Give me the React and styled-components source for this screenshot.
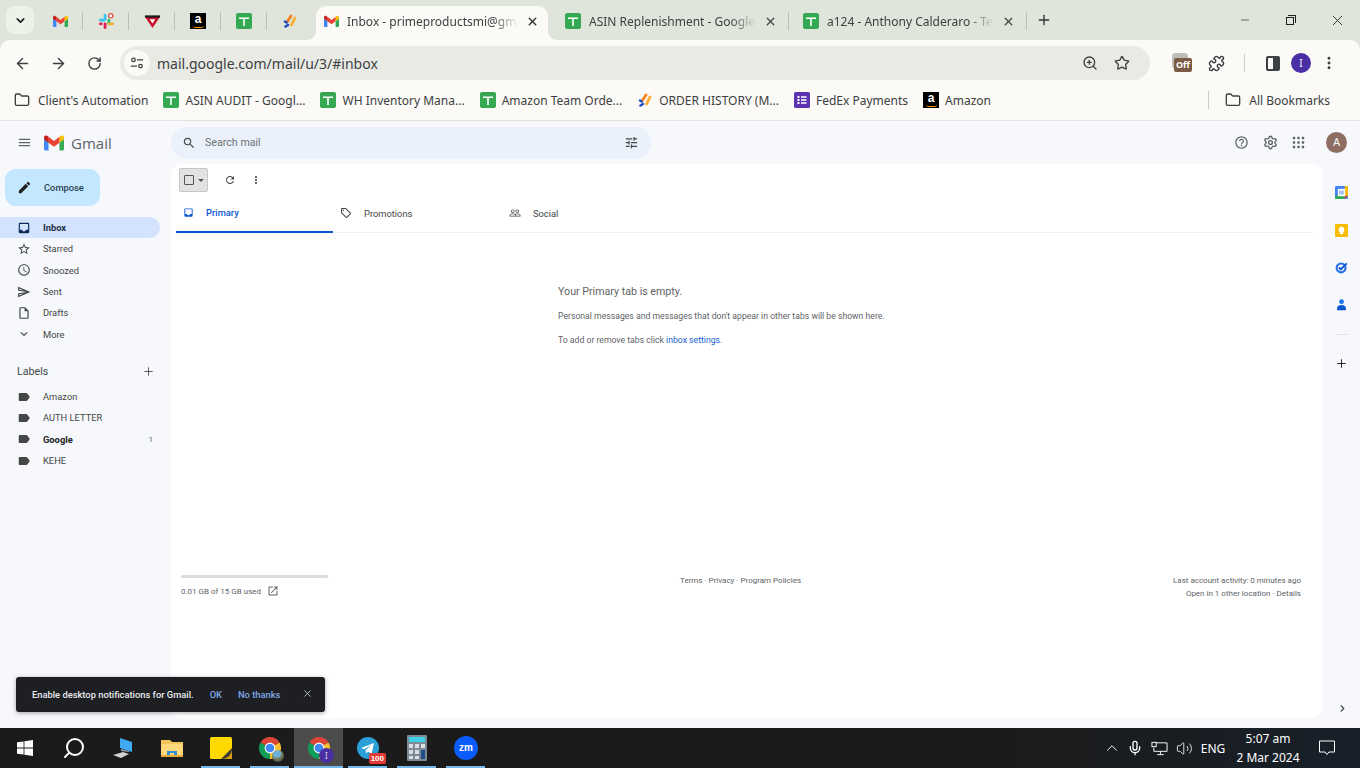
import React from 'react';
import styled, { createGlobalStyle } from 'styled-components';
import { Puzzle, Settings, Minus, Plus, X, ArrowLeft, ArrowRight, RotateCw, Star, ZoomIn, MoreVertical, Folder, ChevronUp, ChevronRight, ChevronDown, Search, Mic, Volume2 } from 'lucide-react';

const GlobalStyle = createGlobalStyle`
  html, body { margin: 0; padding: 0; background: #fff; }
  * { box-sizing: border-box; }
`;

const UI_FONT = `"Noto Sans", "Open Sans", sans-serif`;
const GMAIL_FONT = `Roboto, "Liberation Sans", sans-serif`;

const paths = {
  menu: 'M3 18h18v-2H3v2zm0-5h18v-2H3v2zm0-7v2h18V6H3z',
  search: 'M15.5 14h-.79l-.28-.27C15.41 12.59 16 11.11 16 9.5 16 5.91 13.09 3 9.5 3S3 5.91 3 9.5 5.91 16 9.5 16c1.61 0 3.09-.59 4.23-1.57l.27.28v.79l5 4.99L20.49 19l-4.99-5zm-6 0C7.01 14 5 11.99 5 9.5S7.01 5 9.5 5 14 7.01 14 9.5 11.99 14 9.5 14z',
  tune: 'M3 17v2h6v-2H3zM3 5v2h10V5H3zm10 16v-2h8v-2h-8v-2h-2v6h2zM7 9v2H3v2h4v2h2V9H7zm14 4v-2H11v2h10zm-6-4h2V7h4V5h-4V3h-2v6z',
  pencil: 'M3 17.25V21h3.75L17.81 9.94l-3.75-3.75L3 17.25zM20.71 7.04c.39-.39.39-1.02 0-1.41l-2.34-2.34c-.39-.39-1.02-.39-1.41 0l-1.83 1.83 3.75 3.75 1.83-1.83z',
  inbox: 'M19 3H5c-1.1 0-2 .9-2 2v14c0 1.1.9 2 2 2h14c1.1 0 2-.9 2-2V5c0-1.1-.9-2-2-2zm0 12h-4c0 1.66-1.34 3-3 3s-3-1.34-3-3H5V5h14v10z',
  star: 'M22 9.24l-7.19-.62L12 2 9.19 8.63 2 9.24l5.46 4.73L5.82 21 12 17.27 18.18 21l-1.63-7.03L22 9.24zM12 15.4l-3.76 2.27 1-4.28-3.32-2.88 4.38-.38L12 6.1l1.71 4.04 4.38.38-3.32 2.88 1 4.28L12 15.4z',
  clock: 'M11.99 2C6.47 2 2 6.48 2 12s4.47 10 9.99 10C17.52 22 22 17.52 22 12S17.52 2 11.99 2zM12 20c-4.42 0-8-3.58-8-8s3.58-8 8-8 8 3.58 8 8-3.58 8-8 8zm.5-13H11v6l5.25 3.15.75-1.23-4.5-2.67z',
  sent: 'M4.01 6.03l7.51 3.22-7.52-1 .01-2.22m7.5 8.72L4 17.97v-2.22l7.51-1M2.01 3L2 10l15 2-15 2 .01 7L23 12 2.01 3z',
  draft: 'M14 2H6c-1.1 0-1.99.9-1.99 2L4 20c0 1.1.89 2 1.99 2H18c1.1 0 2-.9 2-2V8l-6-6zM6 20V4h7v5h5v11H6z',
  down: 'M16.59 8.59L12 13.17 7.41 8.59 6 10l6 6 6-6z',
  label: 'M17.63 5.84C17.27 5.33 16.67 5 16 5L5 5.01C3.9 5.01 3 5.9 3 7v10c0 1.1.9 1.99 2 1.99L16 19c.67 0 1.27-.33 1.63-.84L22 12l-4.37-6.16z',
  refresh: 'M17.65 6.35C16.2 4.9 14.21 4 12 4c-4.42 0-7.99 3.58-7.99 8s3.57 8 7.99 8c3.73 0 6.84-2.55 7.73-6h-2.08c-.82 2.33-3.04 4-5.65 4-3.31 0-6-2.69-6-6s2.69-6 6-6c1.66 0 3.14.69 4.22 1.78L13 11h7V4l-2.35 2.35z',
  more: 'M12 8c1.1 0 2-.9 2-2s-.9-2-2-2-2 .9-2 2 .9 2 2 2zm0 2c-1.1 0-2 .9-2 2s.9 2 2 2 2-.9 2-2-.9-2-2-2zm0 6c-1.1 0-2 .9-2 2s.9 2 2 2 2-.9 2-2-.9-2-2-2z',
  tag: 'M21.41 11.58l-9-9C12.05 2.22 11.55 2 11 2H4c-1.1 0-2 .9-2 2v7c0 .55.22 1.05.59 1.42l9 9c.36.36.86.58 1.41.58s1.05-.22 1.41-.59l7-7c.37-.36.59-.86.59-1.41s-.23-1.06-.59-1.42zM13 20.01L4 11V4h7v-.01l9 9-7 7.02zM6.5 5A1.5 1.5 0 1 0 6.5 8 1.5 1.5 0 1 0 6.5 5z',
  people: 'M16.5 13c-1.2 0-3.07.34-4.5 1-1.43-.67-3.3-1-4.5-1C5.33 13 1 14.08 1 16.25V19h22v-2.75c0-2.17-4.33-3.25-6.5-3.25zm-4 4.5h-10v-1.25c0-.54 2.56-1.75 5-1.75s5 1.21 5 1.75v1.25zm9 0H14v-1.25c0-.46-.2-.86-.52-1.22.88-.3 1.96-.53 3.02-.53 2.44 0 5 1.21 5 1.75v1.25zM7.5 12c1.93 0 3.5-1.57 3.5-3.5S9.43 5 7.5 5 4 6.57 4 8.5 5.57 12 7.5 12zm0-5.5c1.1 0 2 .9 2 2s-.9 2-2 2-2-.9-2-2 .9-2 2-2zm9 5.5c1.93 0 3.5-1.57 3.5-3.5S18.43 5 16.5 5 13 6.57 13 8.5s1.57 3.5 3.5 3.5zm0-5.5c1.1 0 2 .9 2 2s-.9 2-2 2-2-.9-2-2 .9-2 2-2z',
  help: 'M11 18h2v-2h-2v2zm1-16C6.48 2 2 6.48 2 12s4.48 10 10 10 10-4.48 10-10S17.52 2 12 2zm0 18c-4.41 0-8-3.59-8-8s3.59-8 8-8 8 3.59 8 8-3.59 8-8 8zm0-14c-2.21 0-4 1.79-4 4h2c0-1.1.9-2 2-2s2 .9 2 2c0 2-3 1.75-3 5h2c0-2.25 3-2.5 3-5 0-2.21-1.79-4-4-4z',
  open: 'M19 19H5V5h7V3H5c-1.11 0-2 .9-2 2v14c0 1.1.89 2 2 2h14c1.1 0 2-.9 2-2v-7h-2v7zM14 3v2h3.59l-9.83 9.83 1.41 1.41L19 6.41V10h2V3h-7z',
};

const Svg = styled.svg`
  display: block;
  flex: none;
  width: ${(p) => p.$size}px;
  height: ${(p) => p.$size}px;
  fill: ${(p) => p.$color || '#444746'};
`;

const MatIcon = ({ name, size = 13, color }) => (
  <Svg viewBox="0 0 24 24" $size={size} $color={color}><path d={paths[name]} /></Svg>
);

const GmailLogo = ({ size }) => (
  <Svg viewBox="0 0 256 193" $size={size}>
    <path fill="#4285F4" d="M58.182 192.05V93.14L27.507 65.077 0 49.504v125.091c0 9.658 7.825 17.455 17.455 17.455h40.727Z" />
    <path fill="#34A853" d="M197.818 192.05h40.727c9.659 0 17.455-7.826 17.455-17.455V49.505l-31.156 17.837-27.026 25.798v98.91Z" />
    <path fill="#EA4335" d="m58.182 93.14-4.174-38.647 4.174-36.989L128 69.868l69.818-52.364 4.669 34.992-4.669 40.644L128 145.504z" />
    <path fill="#FBBC04" d="M197.818 17.504V93.14L256 49.504V26.231c0-21.585-24.64-33.89-41.89-20.945l-16.292 12.218Z" />
    <path fill="#C5221F" d="m0 49.504 26.759 20.07L58.182 93.14V17.504L41.89 5.286C24.61-7.66 0 4.646 0 26.23v23.273Z" />
  </Svg>
);

const SheetsIcon = ({ size = 16 }) => (
  <Svg viewBox="0 0 16 16" $size={size}>
    <rect width="16" height="16" rx="2" fill="#34a853" />
    <path d="M3 4.5h10v1.6H8.8V13H7.2V6.1H3z" fill="#fff" />
  </Svg>
);

const SlackIcon = () => (
  <Svg viewBox="0 0 18 18" $size={17}>
    <rect x="6" y="1" width="3" height="7" rx="1.5" fill="#36c5f0" />
    <rect x="1" y="6" width="7" height="3" rx="1.5" fill="#36c5f0" />
    <rect x="10" y="6" width="3" height="7" rx="1.5" fill="#2eb67d" transform="rotate(0)" />
    <rect x="10" y="10" width="7" height="3" rx="1.5" fill="#ecb22e" />
    <rect x="6" y="10" width="3" height="7" rx="1.5" fill="#e01e5a" />
    <rect x="1" y="10" width="4" height="3" rx="1.5" fill="#e01e5a" />
    <circle cx="13.5" cy="3" r="2.3" fill="#fff" stroke="#e0483e" strokeWidth="1.3" />
  </Svg>
);

const VeeIcon = () => (
  <Svg viewBox="0 0 18 16" $size={17}>
    <path d="M1 3h16L9 15z" fill="#c8102e" />
    <path d="M1 1.5h16V4H1z" fill="#1d1d1d" />
    <path d="M6 5.5h6L9 10z" fill="#fff" />
  </Svg>
);

const JiraIcon = ({ size = 16 }) => (
  <Svg viewBox="0 0 16 16" $size={size}>
    <path d="M9 3 5 9" stroke="#f4811f" strokeWidth="2.8" strokeLinecap="round" fill="none" />
    <path d="M13 5l-3.5 7" stroke="#fbb03b" strokeWidth="2.8" strokeLinecap="round" fill="none" />
    <path d="M3 8.5l1.5 1M3.5 13.5l2.5-1.5" stroke="#1c4fc4" strokeWidth="2.6" strokeLinecap="round" fill="none" />
  </Svg>
);

const FormsIcon = () => (
  <Svg viewBox="0 0 16 16" $size={16}>
    <rect width="16" height="16" rx="1.5" fill="#5e35b1" />
    <path d="M3.5 4h2v2h-2zM7 4.3h5.5v1.4H7zM3.5 7h2v2h-2zM7 7.3h5.5v1.4H7zM3.5 10h2v2h-2zM7 10.3h5.5v1.4H7z" fill="#fff" />
  </Svg>
);

const AmazonBox = styled.span`
  position: relative;
  flex: none;
  display: block;
  width: 16px;
  height: 16px;
  background: #000;
  color: #fff;
  font: 700 12px/12px "Liberation Sans", sans-serif;
  text-align: center;
  &::after {
    content: '';
    position: absolute;
    left: 3px;
    right: 2px;
    bottom: 1.5px;
    height: 2px;
    border-bottom: 1.5px solid #f90;
    border-radius: 0 0 8px 8px;
  }
`;
const AmazonIcon = () => <AmazonBox>a</AmazonBox>;

const ChromeLogo = ({ size = 24 }) => (
  <Svg viewBox="0 0 24 24" $size={size}>
    <path d="M12 12 2.47 6.5A11 11 0 0 1 21.53 6.5Z" fill="#db4437" />
    <path d="M12 12 21.53 6.5A11 11 0 0 1 12 23Z" fill="#fbc02d" />
    <path d="M12 12 12 23A11 11 0 0 1 2.47 6.5Z" fill="#0f9d58" />
    <circle cx="12" cy="12" r="5.4" fill="#fff" />
    <circle cx="12" cy="12" r="4.3" fill="#4285f4" />
  </Svg>
);

/* ---------- browser chrome ---------- */

const Page = styled.div`
  position: relative;
  width: 1360px;
  height: 768px;
  overflow: hidden;
  display: flex;
  flex-direction: column;
  background: #dfe5da;
  font-family: ${UI_FONT};
`;

const TabStrip = styled.div`
  height: 40px;
  flex: none;
  display: flex;
  align-items: flex-end;
  padding-left: 6px;
`;

const TabSearch = styled.div`
  width: 28px;
  height: 28px;
  align-self: flex-start;
  margin: 6px 3px 0 0;
  border-radius: 8px;
  background: #edf2e9;
  display: flex;
  align-items: center;
  justify-content: center;
`;

const PinnedTab = styled.div`
  width: 46px;
  height: 34px;
  display: flex;
  align-items: center;
  justify-content: center;
  position: relative;
  padding-bottom: 4px;
  &::after {
    content: '';
    display: ${(p) => (p.$sep ? 'block' : 'none')};
    position: absolute;
    right: 0;
    top: 6px;
    height: 18px;
    width: 1px;
    background: #b9c2b4;
  }
`;

const ActiveTab = styled.div`
  position: relative;
  width: 232px;
  height: 34px;
  margin: 0 3px;
  background: #fbfaf6;
  border-radius: 10px 10px 0 0;
  display: flex;
  align-items: center;
  padding: 0 9px 4px 8px;
  gap: 8px;
  margin-left: 3px;
  &::before, &::after {
    content: '';
    position: absolute;
    bottom: 0;
    width: 8px;
    height: 8px;
    background: radial-gradient(circle at ${(p) => p.$c || '0 0'}, transparent 8px, #fbfaf6 8.5px);
  }
  &::before { left: -8px; background: radial-gradient(circle at 0 0, transparent 7.5px, #fbfaf6 8px); }
  &::after { right: -8px; background: radial-gradient(circle at 100% 0, transparent 7.5px, #fbfaf6 8px); }
`;

const Tab = styled.div`
  position: relative;
  width: 238px;
  height: 34px;
  display: flex;
  align-items: center;
  gap: 8px;
  padding: 0 12px 4px 14px;
  &::after {
    content: '';
    position: absolute;
    right: 0;
    top: 6px;
    height: 18px;
    width: 1px;
    background: #b9c2b4;
  }
`;

const TabTitle = styled.span`
  flex: 1;
  min-width: 0;
  overflow: hidden;
  white-space: nowrap;
  font-size: 12px;
  color: #3c4043;
  -webkit-mask-image: linear-gradient(to right, #000 85%, transparent 100%);
  mask-image: linear-gradient(to right, #000 85%, transparent 100%);
`;

const NewTab = styled.div`
  width: 34px;
  height: 34px;
  display: flex;
  align-items: center;
  justify-content: center;
  padding-bottom: 6px;
`;

const WindowControls = styled.div`
  margin-left: auto;
  align-self: flex-start;
  display: flex;
`;

const WindowButton = styled.div`
  width: 46px;
  height: 40px;
  display: flex;
  align-items: center;
  justify-content: center;
`;

const RestoreGlyph = styled.span`
  position: relative;
  display: block;
  width: 8px;
  height: 8px;
  margin: 2px 2px 0 0;
  border: 1px solid #1f1f1f;
  background: #dfe5da;
  &::before {
    content: '';
    position: absolute;
    top: -3px;
    right: -3px;
    width: 7px;
    height: 7px;
    border-top: 1px solid #1f1f1f;
    border-right: 1px solid #1f1f1f;
    border-radius: 0 1px 0 0;
  }
`;

const Toolbar = styled.div`
  height: 40px;
  flex: none;
  display: flex;
  align-items: center;
  background: #fbfaf6;
  border-radius: 10px 10px 0 0;
  padding: 6px 0 0 4px;
`;

const NavButton = styled.div`
  width: 36px;
  height: 34px;
  flex: none;
  display: flex;
  align-items: center;
  justify-content: center;
`;

const Omnibox = styled.div`
  width: 1030px;
  height: 34px;
  margin-left: 8px;
  background: #e9eae3;
  border-radius: 17px;
  display: flex;
  align-items: center;
  padding: 0 12px 0 4px;
`;

const SiteInfo = styled.div`
  width: 26px;
  height: 26px;
  border-radius: 50%;
  background: #fbfaf6;
  display: flex;
  align-items: center;
  justify-content: center;
  margin-right: 7px;
`;

const Url = styled.span`
  flex: 1;
  font-size: 14px;
  color: #3c4043;
`;

const OmniAction = styled.div`
  width: 32px;
  display: flex;
  align-items: center;
  justify-content: center;
`;

const ToolActions = styled.div`
  display: flex;
  align-items: center;
  margin-left: 12px;
`;

const ToolDivider = styled.div`
  width: 1px;
  height: 18px;
  margin: 0 10px;
  background: #c9cfc4;
`;

const ExtensionOff = styled.div`
  position: relative;
  width: 36px;
  height: 34px;
`;

const OffBack = styled.span`
  position: absolute;
  left: 10px;
  top: 7px;
  width: 16px;
  height: 16px;
  border-radius: 4px;
  background: #bdbdb8;
`;

const OffBadge = styled.span`
  position: absolute;
  left: 12px;
  top: 12px;
  width: 18px;
  height: 14px;
  border-radius: 2px;
  background: #7a5c45;
  color: #fff;
  font: 700 9px/14px ${UI_FONT};
  text-align: center;
`;

const Profile = styled.div`
  width: 20px;
  height: 20px;
  border-radius: 50%;
  background: #4a2ea3;
  color: #fff;
  font-size: 10px;
  line-height: 20px;
  text-align: center;
`;

const PanelIcon = styled.span`
  display: block;
  width: 14px;
  height: 15px;
  border: 2px solid #3c4043;
  border-radius: 2px;
  background: linear-gradient(to right, transparent 50%, #3c4043 50%);
`;

const BookmarksBar = styled.div`
  height: 40px;
  flex: none;
  display: flex;
  align-items: center;
  background: #fbfaf6;
  padding: 0 15px 0 14px;
`;

const Bookmark = styled.div`
  display: flex;
  align-items: center;
  gap: ${(p) => p.$gap || 6}px;
  margin-right: 15px;
  font-size: 12px;
  color: #3c4043;
  white-space: nowrap;
`;

const BookmarkDivider = styled.div`
  width: 1px;
  height: 18px;
  margin: 0 16px 0 auto;
  background: #c9cfc4;
`;

/* ---------- gmail ---------- */

const Gmail = styled.div`
  flex: 1;
  min-height: 0;
  display: flex;
  flex-direction: column;
  background: #f6f8fc;
  border-top: 1px solid #e6e3de;
  font-family: ${GMAIL_FONT};
  color: #444746;
`;

const Header = styled.header`
  height: 43px;
  flex: none;
  display: flex;
  align-items: center;
`;

const Brand = styled.div`
  width: 171px;
  flex: none;
  display: flex;
  align-items: center;
  padding-left: 17px;
`;

const BrandName = styled.span`
  margin-left: 7px;
  font: 400 15px "Open Sans", sans-serif;
  color: #5f6368;
`;

const SearchBox = styled.div`
  width: 480px;
  height: 32px;
  border-radius: 16px;
  background: #eaf1fb;
  display: flex;
  align-items: center;
  padding: 0 12px 0 11px;
  gap: 9px;
  font-size: 10.67px;
  color: #6f7275;
`;

const SearchLabel = styled.span`
  flex: 1;
`;

const HeaderActions = styled.div`
  margin-left: auto;
  display: flex;
  align-items: center;
  gap: 14px;
  padding-right: 13px;
`;

const Avatar = styled.div`
  width: 21px;
  height: 21px;
  margin-left: 7px;
  border-radius: 50%;
  background: #8d6e63;
  color: #fff;
  font-size: 11px;
  line-height: 21px;
  text-align: center;
`;

const Body = styled.div`
  flex: 1;
  min-height: 0;
  display: flex;
`;

const Sidebar = styled.nav`
  width: 171px;
  flex: none;
  padding-top: 5px;
`;

const Compose = styled.div`
  width: 95px;
  height: 37px;
  margin: 0 0 11px 5px;
  border-radius: 11px;
  background: #c2e7ff;
  display: flex;
  align-items: center;
  padding-left: 12px;
  gap: 12px;
  font-size: 9.33px;
  font-weight: 500;
  color: #2c3e50;
`;

const NavRow = styled.div`
  width: 160px;
  height: 21.33px;
  display: flex;
  align-items: center;
  padding: 0 7px 0 17px;
  gap: 12px;
  border-radius: 0 11px 11px 0;
  font-size: 9.33px;
  background: ${(p) => (p.$active ? '#d3e3fd' : 'transparent')};
  font-weight: ${(p) => (p.$active || p.$bold ? 700 : 400)};
  color: ${(p) => (p.$active ? '#1f2f4a' : p.$bold ? '#202124' : '#444746')};
`;

const NavText = styled.span`
  flex: 1;
`;

const NavCount = styled.span`
  font-size: 8px;
  font-weight: 400;
  color: #5f6368;
`;

const LabelsHeader = styled.div`
  width: 160px;
  height: 18px;
  margin-top: 18px;
  margin-bottom: 5px;
  padding: 0 5px 0 17px;
  display: flex;
  align-items: center;
  justify-content: space-between;
  font-size: 10.67px;
`;

const MainPanel = styled.main`
  width: 1152px;
  height: 554px;
  flex: none;
  display: flex;
  flex-direction: column;
  background: #fff;
  border-radius: 11px;
`;

const ListToolbar = styled.div`
  height: 32px;
  flex: none;
  padding: 4px 0 4px 8px;
  display: flex;
  align-items: center;
`;

const SelectButton = styled.div`
  width: 29px;
  height: 24px;
  border: 1px solid #c8c8c8;
  border-radius: 2px;
  background: #e2e2e2;
  display: flex;
  align-items: center;
  padding-left: 3px;
  margin-right: 9px;
`;

const CheckBox = styled.span`
  display: block;
  width: 10px;
  height: 10px;
  margin-left: 1px;
  border: 1px solid #555;
  border-radius: 1px;
`;

const Caret = styled.span`
  display: block;
  margin-left: 4px;
  border-left: 3px solid transparent;
  border-right: 3px solid transparent;
  border-top: 3px solid #555;
`;

const ToolButton = styled.div`
  width: 26px;
  display: flex;
  align-items: center;
  justify-content: center;
`;

const Tabs = styled.div`
  height: 37px;
  flex: none;
  margin: 0 10px 0 5px;
  display: flex;
  border-bottom: 1px solid #efefef;
`;

const CategoryTab = styled.div`
  width: ${(p) => p.$w}px;
  height: 37px;
  display: flex;
  align-items: center;
  gap: 12px;
  padding: 0 0 3px 7px;
  font-size: 9.33px;
  font-weight: ${(p) => (p.$active ? 500 : 400)};
  color: ${(p) => (p.$active ? '#0b57d0' : '#444746')};
  border-bottom: ${(p) => (p.$active ? '2px solid #0b57d0' : 'none')};
`;

const EmptyState = styled.section`
  height: 343px;
  flex: none;
  padding: 52px 0 0 387px;
  color: #5f6368;
`;

const EmptyTitle = styled.div`
  font-size: 10.67px;
  line-height: 14px;
  margin-bottom: 11px;
`;

const EmptyLine = styled.div`
  font-size: 8.67px;
  line-height: 12px;
  margin-bottom: 12px;
`;

const InlineLink = styled.span`
  color: #1a5fd0;
`;

const Footer = styled.footer`
  display: grid;
  grid-template-columns: 147px 1fr auto;
  padding: 0 22px 0 10px;
  margin-top: -1px;
  font-size: 8px;
  color: #5f6368;
`;

const StorageBar = styled.div`
  height: 3px;
  border-radius: 2px;
  background: #dadce0;
  margin-bottom: 7px;
`;

const StorageText = styled.div`
  display: flex;
  align-items: center;
  gap: 6px;
  height: 12px;
  white-space: nowrap;
`;

const FooterLinks = styled.div`
  padding-left: 352px;
  line-height: 11px;
`;

const Activity = styled.div`
  text-align: right;
  line-height: 13px;
  margin-top: -1px;
`;

const Rail = styled.aside`
  flex: 1;
  display: flex;
  flex-direction: column;
  align-items: center;
  padding: 10px 1px 0 0;
  height: 564px;
`;

const RailItem = styled.div`
  height: 37.4px;
  display: flex;
  align-items: center;
  justify-content: center;
`;

const RailDivider = styled.div`
  width: 13px;
  height: 1px;
  margin: 10px 0 10px;
  background: #dfe1e5;
`;

const RailFoot = styled.div`
  margin-top: auto;
  padding: 0 0 10px 3px;
`;

const Snackbar = styled.div`
  position: absolute;
  left: 16px;
  top: 677px;
  width: 309px;
  height: 35px;
  border-radius: 3px;
  background: #1e1f23;
  box-shadow: 0 1px 4px rgba(0, 0, 0, 0.35);
  display: flex;
  align-items: center;
  padding: 0 12px 0 16px;
  font: 500 9.33px ${GMAIL_FONT};
  color: #e8eaed;
`;

const SnackText = styled.span`
  margin-right: 16px;
`;

const SnackAction = styled.span`
  margin-right: 16px;
  color: #7fa8e8;
`;

const SnackClose = styled.span`
  margin-left: auto;
`;

/* ---------- taskbar ---------- */

const Taskbar = styled.div`
  height: 40px;
  flex: none;
  display: flex;
  align-items: center;
  background: linear-gradient(to right, #1b1b1b 0%, #1b1b1b 75%, #17202a 100%);
`;

const Slot = styled.div`
  position: relative;
  width: 49.05px;
  height: 40px;
  flex: none;
  display: flex;
  align-items: center;
  justify-content: center;
  background: ${(p) => (p.$active ? '#4c4c4c' : 'transparent')};
  &::after {
    content: '';
    display: ${(p) => (p.$running ? 'block' : 'none')};
    position: absolute;
    bottom: 0;
    left: ${(p) => (p.$active ? 0 : 5)}px;
    right: ${(p) => (p.$active ? 0 : 5)}px;
    height: 2px;
    background: #76b9ed;
  }
`;

const BadgeWrap = styled.div`
  position: relative;
  width: 24px;
  height: 24px;
`;

const PhotoBadge = styled.span`
  position: absolute;
  right: -2px;
  bottom: -2px;
  width: 12px;
  height: 12px;
  border-radius: 50%;
  background: radial-gradient(circle at 40% 30%, #6fb0d8 0 35%, #7c8a6a 40%, #2c2c24 100%);
`;

const ProfileBadge = styled.span`
  position: absolute;
  right: -3px;
  bottom: -3px;
  width: 15px;
  height: 15px;
  border-radius: 50%;
  background: #4a2ea3;
  color: #ddd;
  font: 400 8px/15px ${UI_FONT};
  text-align: center;
`;

const CountBadge = styled.span`
  position: absolute;
  right: -6px;
  bottom: -4px;
  width: 17px;
  height: 11px;
  border-radius: 2px;
  background: #e53935;
  color: #fff;
  font: 700 8px/11px "Liberation Sans", sans-serif;
  text-align: center;
`;

const ZoomBall = styled.div`
  width: 24px;
  height: 24px;
  border-radius: 50%;
  background: #0b5cff;
  color: #fff;
  font: 700 10px/23px "Liberation Sans", sans-serif;
  text-align: center;
`;

const Tray = styled.div`
  margin-left: auto;
  display: flex;
  align-items: center;
  color: #fff;
`;

const TrayItem = styled.div`
  width: ${(p) => p.$w}px;
  display: flex;
  align-items: center;
  justify-content: center;
  font-size: 12px;
`;

const Clock = styled.div`
  width: 76px;
  text-align: center;
  font-size: 12px;
  line-height: 19px;
  color: #fff;
`;

const StartIcon = () => (
  <Svg viewBox="0 0 16 16" $size={16} $color="#fff">
    <path d="M0 2.3 6.6 1.4v6.2H0zM7.4 1.3 16 0v7.6H7.4zM0 8.4h6.6v6.2L0 13.7zM7.4 8.4H16V16l-8.6-1.3z" />
  </Svg>
);

const PcIcon = () => (
  <Svg viewBox="0 0 24 24" $size={24}>
    <path d="M9 2l12 4v10L9 12z" fill="#3fa9f5" />
    <path d="M2 19l10-3 6 2-8 4z" fill="#cfd3d6" />
    <path d="M10 13l8 2v1l-8-1z" fill="#8fa3b0" />
  </Svg>
);

const FolderIcon = () => (
  <Svg viewBox="0 0 24 24" $size={24}>
    <path d="M1 4h9l2 2h11v15H1z" fill="#f5c55a" />
    <path d="M1 8h22v13H1z" fill="#ffd97a" />
    <path d="M7 19v-4h10v4h-3v-2h-4v2z" fill="#2f8fd8" />
    <path d="M1 19h22v2H1z" fill="#e2a93b" />
  </Svg>
);

const StickyIcon = () => (
  <Svg viewBox="0 0 22 24" $size={24}>
    <rect y="1" width="22" height="22" rx="1.5" fill="#ffd800" />
    <path d="M11 23 22 12v9.5a1.5 1.5 0 0 1-1.5 1.5z" fill="#3a3a36" />
    <path d="M22 12v11H11c6 0 11-4 11-11z" fill="#e8a80c" opacity=".9" />
  </Svg>
);

const TelegramIcon = () => (
  <Svg viewBox="0 0 24 24" $size={24}>
    <circle cx="12" cy="12" r="11" fill="#2a9fd8" />
    <path d="M5 12l13-5-2.4 11-3.6-2.6-2 2-.3-3.4 5.5-5-7 4.2z" fill="#fff" />
  </Svg>
);

const CalcIcon = () => (
  <Svg viewBox="0 0 20 26" $size={26}>
    <rect width="20" height="26" rx="1" fill="#7d8a96" />
    <rect x="2" y="2" width="16" height="5" fill="#3fd0e8" />
    <path d="M2 9h4v4H2zM8 9h4v4H8zM2 15h4v4H2zM8 15h4v4H8zM2 21h4v3H2zM8 21h4v3H8z" fill="#d8dee3" />
    <path d="M14 9h4v4h-4z" fill="#d8dee3" />
    <path d="M14 15h4v9h-4z" fill="#1d4f86" />
  </Svg>
);

const CalendarIcon = () => (
  <Svg viewBox="0 0 16 16" $size={13}>
    <rect width="16" height="16" rx="1.5" fill="#4285f4" />
    <path d="M12 0h2.5A1.5 1.5 0 0 1 16 1.5V12h-4z" fill="#fbbc04" />
    <path d="M0 12h12v4H1.5A1.5 1.5 0 0 1 0 14.5z" fill="#34a853" />
    <path d="M12 12h4l-4 4z" fill="#ea4335" />
    <rect x="3.5" y="3.5" width="9" height="9" fill="#fff" />
    <rect x="5" y="5.5" width="6" height="5" fill="#a8c3f0" />
  </Svg>
);

const KeepIcon = () => (
  <Svg viewBox="0 0 16 16" $size={13}>
    <rect width="16" height="16" rx="1.5" fill="#fbbc04" />
    <circle cx="8" cy="7" r="3.5" fill="#fff" />
    <rect x="6" y="10" width="4" height="2.5" fill="#fff" />
  </Svg>
);

const TasksIcon = () => (
  <Svg viewBox="0 0 16 16" $size={13}>
    <circle cx="7.5" cy="8.5" r="5.5" fill="none" stroke="#2a71e8" strokeWidth="2.6" />
    <path d="M4.8 8l2.4 2.4L14.5 3" fill="none" stroke="#0b57d0" strokeWidth="2.2" />
  </Svg>
);

const ContactsIcon = () => (
  <Svg viewBox="0 0 16 16" $size={13}>
    <circle cx="8" cy="4.5" r="3" fill="#1a73e8" />
    <path d="M2.5 15v-2.5C2.5 10 5 8.5 8 8.5s5.500 1.500 5.500 4V15z" fill="#0b57d0" />
  </Svg>
);

const AppsGrid = () => (
  <Svg viewBox="0 0 13 13" $size={13} $color="#5f6368">
    {[2, 6.5, 11].flatMap((y) => [2, 6.5, 11].map((x) => <rect key={`${x}-${y}`} x={x - 1.2} y={y - 1.2} width="2.4" height="2.4" rx=".6" />))}
  </Svg>
);

const SiteTune = () => (
  <Svg viewBox="0 0 16 16" $size={14} $color="none">
    <circle cx="4" cy="4.500" r="2" stroke="#3c4043" strokeWidth="1.500" />
    <path d="M8 4.500h7M1 11.500h7" stroke="#3c4043" strokeWidth="1.500" />
    <circle cx="12" cy="11.500" r="2" stroke="#3c4043" strokeWidth="1.500" />
  </Svg>
);

const NetworkIcon = () => (
  <Svg viewBox="0 0 18 16" $size={17} $color="none">
    <path d="M5 2h12v9H3V7M10 11v3M6.500 14.500h7" stroke="#fff" strokeWidth="1" />
    <rect x="1" y="1.500" width="4.500" height="4.500" stroke="#fff" strokeWidth="1" />
  </Svg>
);

const NotifyIcon = () => (
  <Svg viewBox="0 0 16 16" $size={16} $color="none">
    <path d="M.500 1h15v11H10l-2 2.500L6 12H.500z" stroke="#fff" strokeWidth="1" />
  </Svg>
);

const navItems = [
  { icon: 'inbox', text: 'Inbox', active: true, color: '#0f2a5c' },
  { icon: 'star', text: 'Starred' },
  { icon: 'clock', text: 'Snoozed' },
  { icon: 'sent', text: 'Sent' },
  { icon: 'draft', text: 'Drafts' },
  { icon: 'down', text: 'More' },
];

const labels = [
  { text: 'Amazon' },
  { text: 'AUTH LETTER' },
  { text: 'Google', bold: true, count: 1 },
  { text: 'KEHE' },
];

const App = () => (
  <Page>
    <GlobalStyle />
    <TabStrip>
      <TabSearch><ChevronDown size={13} strokeWidth={3} color="#1f1f1f" /></TabSearch>
      <PinnedTab $sep><GmailLogo size={15} /></PinnedTab>
      <PinnedTab $sep><SlackIcon /></PinnedTab>
      <PinnedTab $sep><VeeIcon /></PinnedTab>
      <PinnedTab $sep><AmazonIcon /></PinnedTab>
      <PinnedTab $sep><SheetsIcon /></PinnedTab>
      <PinnedTab><JiraIcon /></PinnedTab>
      <ActiveTab>
        <GmailLogo size={15} />
        <TabTitle>Inbox - primeproductsmi@gmail.com</TabTitle>
        <X size={13} strokeWidth={2.6} color="#333" />
      </ActiveTab>
      <Tab>
        <SheetsIcon />
        <TabTitle>ASIN Replenishment - Google Sheets</TabTitle>
        <X size={13} strokeWidth={2.4} color="#444" />
      </Tab>
      <Tab>
        <SheetsIcon />
        <TabTitle>a124 - Anthony Calderaro - Team</TabTitle>
        <X size={13} strokeWidth={2.4} color="#444" />
      </Tab>
      <NewTab><Plus size={16} strokeWidth={2} color="#333" /></NewTab>
      <WindowControls>
        <WindowButton><Minus size={12} color="#1f1f1f" strokeWidth={1.3} /></WindowButton>
        <WindowButton><RestoreGlyph /></WindowButton>
        <WindowButton><X size={17} color="#1f1f1f" strokeWidth={1.2} /></WindowButton>
      </WindowControls>
    </TabStrip>

    <Toolbar>
      <NavButton><ArrowLeft size={17} color="#3c4043" strokeWidth={2} /></NavButton>
      <NavButton><ArrowRight size={17} color="#3c4043" strokeWidth={2} /></NavButton>
      <NavButton><RotateCw size={15} color="#3c4043" strokeWidth={2.2} /></NavButton>
      <Omnibox>
        <SiteInfo><SiteTune /></SiteInfo>
        <Url>mail.google.com/mail/u/3/#inbox</Url>
        <OmniAction><ZoomIn size={16} color="#3c4043" strokeWidth={2} /></OmniAction>
        <OmniAction><Star size={16} color="#3c4043" strokeWidth={2} /></OmniAction>
      </Omnibox>
      <ToolActions>
        <ExtensionOff><OffBack /><OffBadge>Off</OffBadge></ExtensionOff>
        <NavButton><Puzzle size={17} color="#3c4043" strokeWidth={2} /></NavButton>
        <ToolDivider />
        <NavButton><PanelIcon /></NavButton>
        <Profile>I</Profile>
        <NavButton><MoreVertical size={16} color="#3c4043" strokeWidth={2.4} /></NavButton>
      </ToolActions>
    </Toolbar>

    <BookmarksBar>
      <Bookmark $gap={8}><Folder size={16} color="#3c4043" strokeWidth={2} />Client's Automation</Bookmark>
      <Bookmark><SheetsIcon />ASIN AUDIT - Googl...</Bookmark>
      <Bookmark><SheetsIcon />WH Inventory Mana...</Bookmark>
      <Bookmark><SheetsIcon />Amazon Team Orde...</Bookmark>
      <Bookmark><JiraIcon />ORDER HISTORY (M...</Bookmark>
      <Bookmark><FormsIcon />FedEx Payments</Bookmark>
      <Bookmark><AmazonIcon />Amazon</Bookmark>
      <BookmarkDivider />
      <Bookmark $gap={8}><Folder size={16} color="#3c4043" strokeWidth={2} />All Bookmarks</Bookmark>
    </BookmarksBar>

    <Gmail>
      <Header>
        <Brand>
          <MatIcon name="menu" size={15} color="#5f6368" />
          <Svg as="span" $size={12} />
          <GmailLogo size={20} />
          <BrandName>Gmail</BrandName>
        </Brand>
        <SearchBox>
          <MatIcon name="search" size={14} />
          <SearchLabel>Search mail</SearchLabel>
          <MatIcon name="tune" size={15} />
        </SearchBox>
        <HeaderActions>
          <MatIcon name="help" size={15} color="#5f6368" />
          <Settings size={15} color="#5f6368" strokeWidth={2.2} />
          <AppsGrid />
          <Avatar>A</Avatar>
        </HeaderActions>
      </Header>

      <Body>
        <Sidebar>
          <Compose><MatIcon name="pencil" size={15} color="#1f1f1f" />Compose</Compose>
          {navItems.map((item) => (
            <NavRow key={item.text} $active={item.active}>
              <MatIcon name={item.icon} size={14} color={item.color} />
              <NavText>{item.text}</NavText>
            </NavRow>
          ))}
          <LabelsHeader>Labels<MatIcon name="" size={0} /><Plus size={13} color="#444746" strokeWidth={1.6} /></LabelsHeader>
          {labels.map((item) => (
            <NavRow key={item.text} $bold={item.bold}>
              <MatIcon name="label" size={14} color="#444746" />
              <NavText>{item.text}</NavText>
              {item.count && <NavCount>{item.count}</NavCount>}
            </NavRow>
          ))}
        </Sidebar>

        <MainPanel>
          <ListToolbar>
            <SelectButton><CheckBox /><Caret /></SelectButton>
            <ToolButton><MatIcon name="refresh" size={12} /></ToolButton>
            <ToolButton><MatIcon name="more" size={12} /></ToolButton>
          </ListToolbar>
          <Tabs>
            <CategoryTab $w={157} $active><MatIcon name="inbox" size={11} color="#0b57d0" />Primary</CategoryTab>
            <CategoryTab $w={169} $gap><MatIcon name="tag" size={12} />Promotions</CategoryTab>
            <CategoryTab $w={169}><MatIcon name="people" size={12} />Social</CategoryTab>
          </Tabs>
          <EmptyState>
            <EmptyTitle>Your Primary tab is empty.</EmptyTitle>
            <EmptyLine>Personal messages and messages that don't appear in other tabs will be shown here.</EmptyLine>
            <EmptyLine>To add or remove tabs click <InlineLink>inbox settings</InlineLink>.</EmptyLine>
          </EmptyState>
          <Footer>
            <div>
              <StorageBar />
              <StorageText>0.01 GB of 15 GB used <MatIcon name="open" size={12} color="#5f6368" /></StorageText>
            </div>
            <FooterLinks>Terms · Privacy · Program Policies</FooterLinks>
            <Activity>
              <div>Last account activity: 0 minutes ago</div>
              <div>Open in 1 other location · Details</div>
            </Activity>
          </Footer>
        </MainPanel>

        <Rail>
          <RailItem><CalendarIcon /></RailItem>
          <RailItem><KeepIcon /></RailItem>
          <RailItem><TasksIcon /></RailItem>
          <RailItem><ContactsIcon /></RailItem>
          <RailDivider />
          <RailItem><Plus size={13} color="#1f1f1f" strokeWidth={1.8} /></RailItem>
          <RailFoot><ChevronRight size={11} color="#444746" strokeWidth={2.4} /></RailFoot>
        </Rail>
      </Body>
    </Gmail>

    <Snackbar>
      <SnackText>Enable desktop notifications for Gmail.</SnackText>
      <SnackAction>OK</SnackAction>
      <SnackAction>No thanks</SnackAction>
      <SnackClose><X size={11} color="#cfd2d6" strokeWidth={1.8} /></SnackClose>
    </Snackbar>

    <Taskbar>
      <Slot><StartIcon /></Slot>
      <Slot><Search size={24} color="#fff" strokeWidth={2} style={{ transform: 'scaleX(-1)' }} /></Slot>
      <Slot><PcIcon /></Slot>
      <Slot><FolderIcon /></Slot>
      <Slot $running><StickyIcon /></Slot>
      <Slot $running><BadgeWrap><ChromeLogo /><PhotoBadge /></BadgeWrap></Slot>
      <Slot $running $active><BadgeWrap><ChromeLogo /><ProfileBadge>I</ProfileBadge></BadgeWrap></Slot>
      <Slot $running><BadgeWrap><TelegramIcon /><CountBadge>100</CountBadge></BadgeWrap></Slot>
      <Slot $running><CalcIcon /></Slot>
      <Slot $running><ZoomBall>zm</ZoomBall></Slot>
      <Tray>
        <TrayItem $w={24}><ChevronUp size={18} color="#fff" strokeWidth={1.3} /></TrayItem>
        <TrayItem $w={22}><Mic size={16} color="#fff" strokeWidth={2} /></TrayItem>
        <TrayItem $w={26}><NetworkIcon /></TrayItem>
        <TrayItem $w={24}><Volume2 size={17} color="#fff" strokeWidth={1.2} /></TrayItem>
        <TrayItem $w={34}>ENG</TrayItem>
        <Clock><div>5:07 am</div><div>2 Mar 2024</div></Clock>
        <TrayItem $w={42}><NotifyIcon /></TrayItem>
        <TrayItem $w={12} />
      </Tray>
    </Taskbar>
  </Page>
);

export default App;
